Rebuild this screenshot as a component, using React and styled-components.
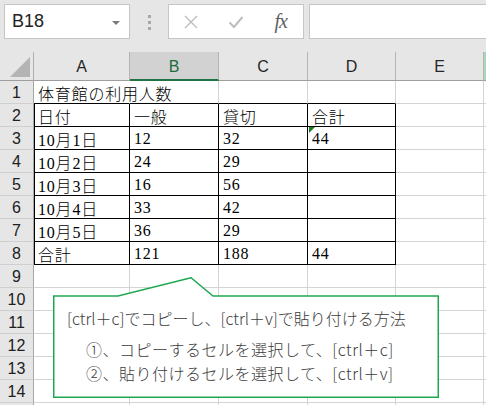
import React from "react";
import styled, { createGlobalStyle, css } from "styled-components";

const GlobalStyle = createGlobalStyle`
  html, body { margin: 0; padding: 0; background: #ffffff; overflow: hidden; }
  * { box-sizing: border-box; }
`;

const Page = styled.div`
  position: relative;
  width: 486px;
  height: 405px;
  overflow: hidden;
  background: #ffffff;
  font-family: "Liberation Sans", "Noto Sans CJK JP", sans-serif;
`;

const TopBar = styled.div`
  display: flex;
  align-items: flex-start;
  height: 52px;
  padding: 4px 0 0 4px;
  background: #e6e6e6;
`;

const NameBox = styled.div`
  position: relative;
  display: flex;
  align-items: center;
  width: 126px;
  height: 35px;
  padding-left: 7px;
  background: #ffffff;
  border: 1px solid #c6c6c6;
  font-size: 18px;
  color: #222;
`;

const DropArrow = styled.span`
  position: absolute;
  right: 9px;
  top: 16px;
  width: 0;
  height: 0;
  border-left: 4px solid transparent;
  border-right: 4px solid transparent;
  border-top: 4px solid #7a7a7a;
`;

const Grip = styled.div`
  display: flex;
  flex-direction: column;
  gap: 3px;
  margin: 11px 0 0 18px;
`;

const GripDot = styled.span`
  width: 3px;
  height: 3px;
  background: #a8a8a8;
`;

const FuncBox = styled.div`
  display: flex;
  align-items: center;
  justify-content: space-around;
  width: 136px;
  height: 35px;
  margin-left: 17px;
  background: #ffffff;
  border: 1px solid #c6c6c6;
`;

const FuncIcon = styled.span`
  display: flex;
  align-items: center;
  justify-content: center;
  width: 20px;
  height: 20px;
`;

const FxText = styled.span`
  font-family: "Liberation Serif", serif;
  font-style: italic;
  font-size: 20px;
  color: #5f5f5f;
  letter-spacing: -1px;
`;

const FormulaInput = styled.div`
  flex: 1;
  height: 35px;
  margin-left: 5px;
  margin-right: -6px;
  background: #ffffff;
  border: 1px solid #c6c6c6;
`;

const Sheet = styled.div`
  display: grid;
  grid-template-columns: 34px 96px 89px 89px 88px 88px 1fr;
  grid-auto-rows: 23px;
  grid-template-rows: 29px;
`;

const Corner = styled.div`
  position: relative;
  background: #e6e6e6;
  border-right: 1px solid #b0b0b0;
  border-bottom: 1px solid #9e9e9e;
  &::after {
    content: "";
    position: absolute;
    right: 3px;
    bottom: 3px;
    width: 0;
    height: 0;
    border-left: 20px solid transparent;
    border-bottom: 20px solid #b4b4b4;
  }
`;

const ColHeader = styled.div`
  display: flex;
  align-items: center;
  justify-content: center;
  background: #e6e6e6;
  border-right: 1px solid #b4b4b4;
  border-bottom: 1px solid #9e9e9e;
  font-size: 16px;
  color: #262626;
  padding-top: 1px;
  ${(p) =>
    p.$selected &&
    css`
      background: #d2d2d2;
      color: #1c6b3d;
      border-bottom: 2px solid #217346;
      padding-top: 2px;
    `}
  ${(p) =>
    p.$edge &&
    css`
      background: #a7d8ba;
      border-right: none;
    `}
`;

const RowHeader = styled.div`
  display: flex;
  align-items: center;
  justify-content: center;
  background: #e6e6e6;
  border-right: 1px solid #a6a6a6;
  border-bottom: 1px solid #cfcfcf;
  font-size: 16px;
  color: #202020;
  padding-top: 1px;
`;

const Cell = styled.div`
  position: relative;
  display: flex;
  align-items: center;
  padding: 2px 0 0 4px;
  white-space: nowrap;
  overflow: visible;
  font-family: "Liberation Serif", "Noto Sans CJK JP", serif;
  font-size: 16px;
  font-weight: 300;
  letter-spacing: 0.8px;
  color: #000;
  border-right: 1px solid ${(p) => (p.$blackRight ? "#000" : p.$noRight ? "transparent" : "#d4d4d4")};
  border-bottom: 1px solid ${(p) => (p.$blackBottom ? "#000" : "#d4d4d4")};
  ${(p) =>
    p.$blackLeft &&
    css`
      box-shadow: inset 1px 0 0 #000;
    `}
  ${(p) =>
    p.$flag &&
    css`
      &::before {
        content: "";
        position: absolute;
        left: 1px;
        top: 0;
        width: 0;
        height: 0;
        border-top: 6px solid #1a7f22;
        border-right: 6px solid transparent;
      }
    `}
`;

const Callout = styled.div`
  position: absolute;
  left: 53px;
  top: 277px;
  width: 386px;
  height: 121px;
`;

const CalloutShape = styled.svg`
  position: absolute;
  inset: 0;
`;

const CalloutText = styled.div`
  position: relative;
  display: flex;
  flex-direction: column;
  padding: 29px 0 0 14px;
  font-family: "Noto Sans CJK JP", sans-serif;
  font-size: 16px;
  font-weight: 300;
  color: #3c3c3c;
`;

const CalloutLine = styled.div`
  height: 24px;
  line-height: 24px;
  white-space: nowrap;
  ${(p) =>
    p.$indent &&
    css`
      padding-left: 19px;
      letter-spacing: 0.5px;
    `}
  ${(p) =>
    p.$gap &&
    css`
      margin-top: 7px;
    `}
`;

const columns = ["A", "B", "C", "D", "E", ""];

const data = [
  ["体育館の利用人数", "", "", ""],
  ["日付", "一般", "貸切", "合計"],
  ["10月1日", "12", "32", "44"],
  ["10月2日", "24", "29", ""],
  ["10月3日", "16", "56", ""],
  ["10月4日", "33", "42", ""],
  ["10月5日", "36", "29", ""],
  ["合計", "121", "188", "44"],
];

const TOTAL_ROWS = 15;

export default function App() {
  const rows = [];
  for (let r = 1; r <= TOTAL_ROWS; r++) {
    const values = data[r - 1] || [];
    rows.push(<RowHeader key={`rh${r}`}>{r}</RowHeader>);
    for (let c = 0; c < 6; c++) {
      const inTable = r >= 2 && r <= 8 && c <= 3;
      const blackBottom = r >= 1 && r <= 8 && c <= 3;
      rows.push(
        <Cell
          key={`c${r}-${c}`}
          $blackRight={inTable}
          $blackBottom={blackBottom}
          $blackLeft={inTable && c === 0}
          $noRight={r === 1 && c === 0}
          $flag={r === 3 && c === 3}
        >
          {values[c] || ""}
        </Cell>
      );
    }
  }

  return (
    <Page>
      <GlobalStyle />
      <TopBar>
        <NameBox>
          B18
          <DropArrow />
        </NameBox>
        <Grip>
          <GripDot />
          <GripDot />
          <GripDot />
        </Grip>
        <FuncBox>
          <FuncIcon>
            <svg width="14" height="14" viewBox="0 0 14 14">
              <path d="M1 1 L13 13 M13 1 L1 13" stroke="#bdbdbd" strokeWidth="1.4" fill="none" />
            </svg>
          </FuncIcon>
          <FuncIcon>
            <svg width="16" height="14" viewBox="0 0 16 14">
              <path d="M1.5 7.5 L6 12 L14.5 2" stroke="#bdbdbd" strokeWidth="2" fill="none" />
            </svg>
          </FuncIcon>
          <FuncIcon>
            <FxText>fx</FxText>
          </FuncIcon>
        </FuncBox>
        <FormulaInput />
      </TopBar>
      <Sheet>
        <Corner />
        {columns.map((col, i) => (
          <ColHeader key={col || "edge"} $selected={col === "B"} $edge={i === 5}>
            {col}
          </ColHeader>
        ))}
        {rows}
      </Sheet>
      <Callout>
        <CalloutShape width="386" height="121" viewBox="0 0 386 121">
          <polygon
            points="0.75,19 65,19 138,0.75 160,19 385.25,19 385.25,120.25 0.75,120.25"
            fill="#ffffff"
            stroke="#1fa852"
            strokeWidth="1.5"
          />
        </CalloutShape>
        <CalloutText>
          <CalloutLine>[ctrl＋c]でコピーし、[ctrl＋v]で貼り付ける方法</CalloutLine>
          <CalloutLine $indent $gap>①、コピーするセルを選択して、[ctrl＋c]</CalloutLine>
          <CalloutLine $indent>②、貼り付けるセルを選択して、[ctrl＋v]</CalloutLine>
        </CalloutText>
      </Callout>
    </Page>
  );
}
